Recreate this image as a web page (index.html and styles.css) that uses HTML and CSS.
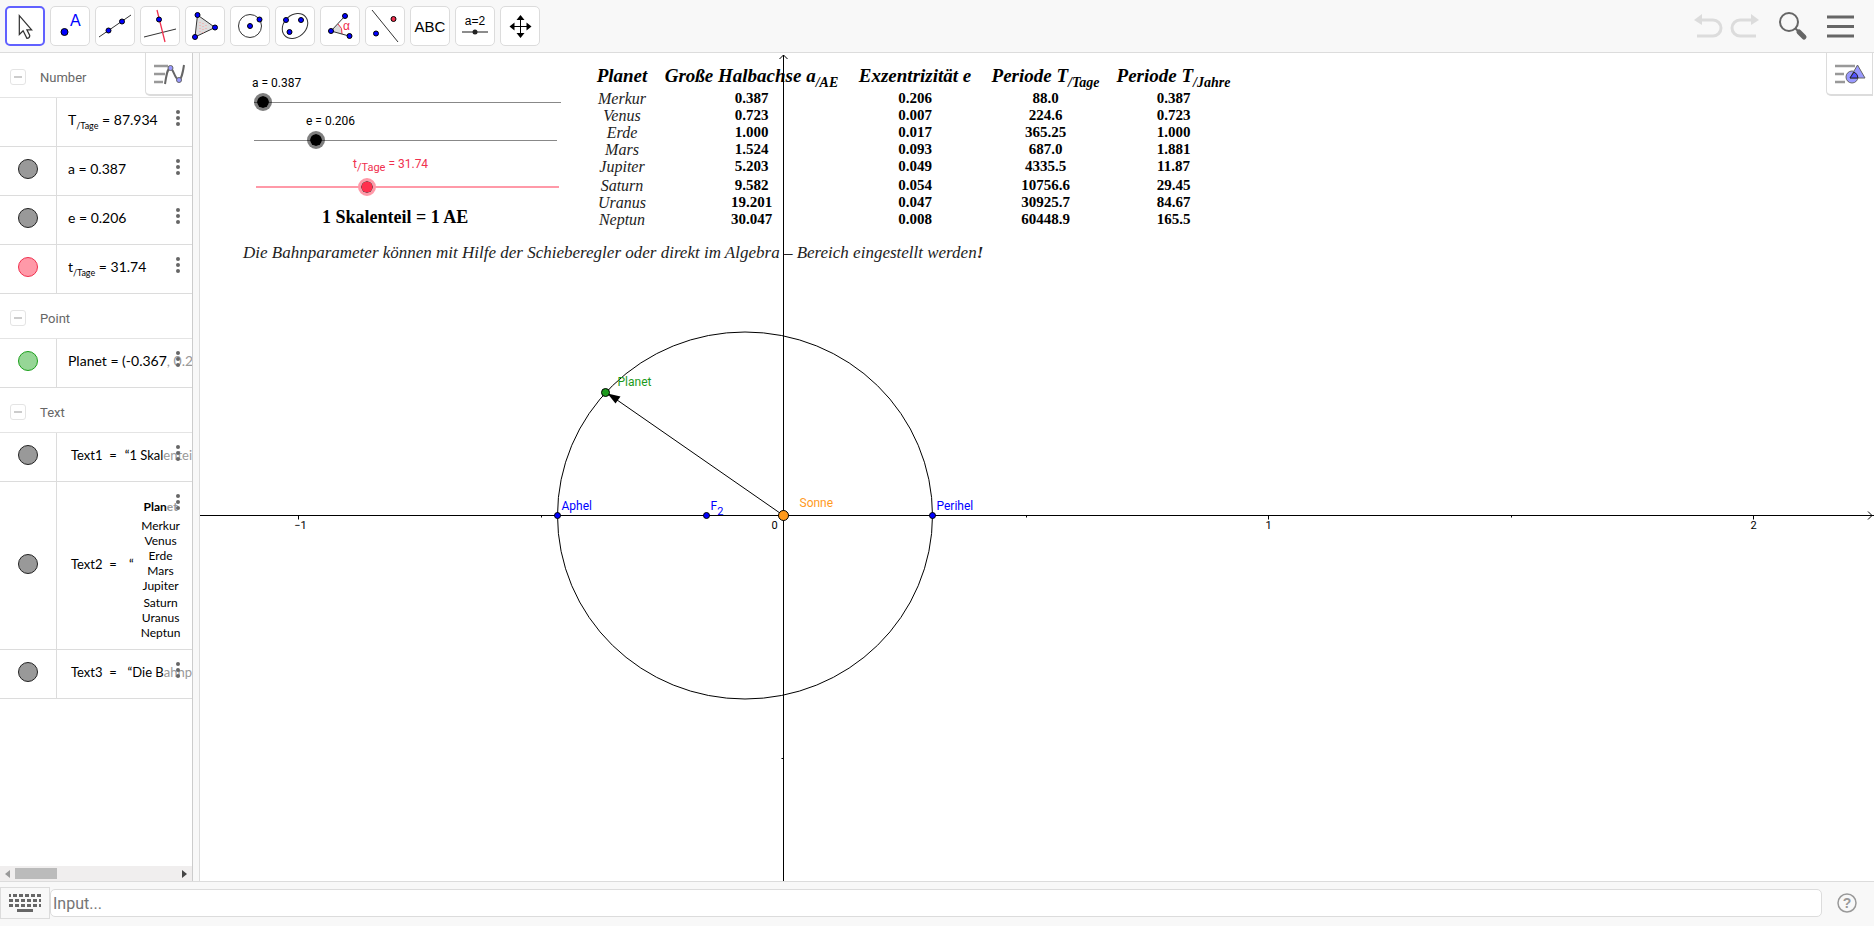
FILE: index.html
```
<!DOCTYPE html>
<html lang="de">
<head>
    <meta charset="utf-8">
    <title>GeoGebra - Planetenbahn</title>
    <link rel="stylesheet" href="styles.css">
</head>
<body>
    <header class="toolbar">
        <div class="tools">
            <button type="button" class="tool active" aria-label="Move"><svg viewBox="0 0 38 38"><path d="M13 8v20l4-4 4 8q3 0 3-3l-3-6h5z" fill="#fff" stroke="#333" stroke-width="1.300"/></svg></button>
            <button type="button" class="tool" aria-label="Point"><svg viewBox="0 0 38 38"><circle class="pt" cx="13.500" cy="25" r="3.500"/><text x="19" y="19" font-size="16" fill="#00f">A</text></svg></button>
            <button type="button" class="tool" aria-label="Line"><svg viewBox="0 0 38 38"><path class="ln" d="M3 30 35 8"/><circle class="pt" cx="12.500" cy="23.500" r="2.500"/><circle class="pt" cx="26" cy="14.500" r="2.500"/></svg></button>
            <button type="button" class="tool" aria-label="Perpendicular line"><svg viewBox="0 0 38 38"><path class="ln" d="M3 30 35 22"/><path d="M16 3l8 32" stroke="#f0304e" stroke-width="1.300"/><circle class="pt" cx="18" cy="12.500" r="2.500"/></svg></button>
            <button type="button" class="tool" aria-label="Polygon"><svg viewBox="0 0 38 38"><path d="M11.500 8 29 20.500 9 30z" fill="#ddd" stroke="#333"/><path d="M14 15v10M17 16v10M20 18v6" stroke="#f99" stroke-dasharray="1 2"/><circle class="pt" cx="11.500" cy="8" r="2.500"/><circle class="pt" cx="29" cy="20.500" r="2.500"/><circle class="pt" cx="9" cy="30" r="2.500"/></svg></button>
            <button type="button" class="tool" aria-label="Circle"><svg viewBox="0 0 38 38"><circle class="ln" cx="19" cy="19" r="11.500"/><circle class="pt" cx="19" cy="19" r="2.500"/><circle class="pt" cx="28.500" cy="12.500" r="2.500"/></svg></button>
            <button type="button" class="tool" aria-label="Ellipse"><svg viewBox="0 0 38 38"><ellipse class="ln" cx="19" cy="19" rx="14" ry="11" transform="rotate(-42 19 19)"/><circle class="pt" cx="10" cy="13" r="2.500"/><circle class="pt" cx="25" cy="13" r="2.500"/><circle class="pt" cx="13.500" cy="25" r="2.500"/></svg></button>
            <button type="button" class="tool" aria-label="Angle"><svg viewBox="0 0 38 38"><path d="M10 24l7-7q5 4 4 10z" fill="#ddd"/><path d="M17 17q5 4 4 10" fill="none" stroke="#f0304e"/><path class="ln" d="M24 9 10 24l18 5"/><text x="22" y="23" font-size="12" fill="#f0304e">α</text><circle class="pt" cx="24" cy="9" r="2.500"/><circle class="pt" cx="10" cy="24" r="2.500"/><circle class="pt" cx="28.500" cy="29" r="2.500"/></svg></button>
            <button type="button" class="tool" aria-label="Reflect"><svg viewBox="0 0 38 38"><path class="ln" d="M6 3 32 35"/><circle class="pt" cx="10" cy="26.500" r="2.500"/><circle class="pt red" cx="27.500" cy="12" r="2.500"/></svg></button>
            <button type="button" class="tool" aria-label="Text"><svg viewBox="0 0 38 38"><text x="19" y="25" font-size="15" text-anchor="middle">ABC</text></svg></button>
            <button type="button" class="tool" aria-label="Slider"><svg viewBox="0 0 38 38"><text x="19" y="18" font-size="12" text-anchor="middle">a=2</text><path d="M6 25h26" stroke="#666" stroke-width="1.500"/><circle cx="19" cy="25" r="2.500" fill="#222"/></svg></button>
            <button type="button" class="tool" aria-label="Move view"><svg viewBox="0 0 38 38"><path d="M12 19.500h15M19.500 12v15" stroke="#000"/><path d="M19.500 8l4 5h-8zM19.500 31l4-5h-8zM8.500 19.500l5-4v8zM30.500 19.500l-5-4v8z"/></svg></button>
        </div>
        <div class="actions">
            <button type="button" class="plain" aria-label="Undo"><svg width="30" height="26" viewBox="0 0 30 26"><path d="M9 7h11a8 8 0 0 1 0 16H4" fill="none" stroke="#dcdcdc" stroke-width="3"/><path d="M1 7l8-6v11z" fill="#dcdcdc"/></svg></button>
            <button type="button" class="plain" aria-label="Redo"><svg width="30" height="26" viewBox="0 0 30 26"><path d="M21 7H10a8 8 0 0 0 0 16h16" fill="none" stroke="#dcdcdc" stroke-width="3"/><path d="M29 7l-8-6v11z" fill="#dcdcdc"/></svg></button>
            <button type="button" class="plain search" aria-label="Search"><svg width="30" height="30" viewBox="0 0 30 30"><circle cx="11" cy="11" r="9" fill="none" stroke="#666" stroke-width="2"/><path d="M17 17l4 4" stroke="#666" stroke-width="2"/><path d="M21 21l5 5" stroke="#666" stroke-width="5" stroke-linecap="round"/></svg></button>
            <button type="button" class="plain" aria-label="Menu"><svg width="27" height="23" viewBox="0 0 27 23"><path d="M0 2h27M0 11.500h27M0 21h27" stroke="#666" stroke-width="3"/></svg></button>
        </div>
    </header>

    <main class="views">
        <aside class="algebra">
            <button type="button" class="stylebar" aria-label="Algebra style bar"><svg width="32" height="22" viewBox="0 0 32 22"><path d="M1 3h14M1 11h11M1 19h9" stroke="#999" stroke-width="2.500"/><path d="M12 21C14 8 15 5 17.500 5S22 17 26 17c2 0 4-8 5-15" fill="none" stroke="#666" stroke-width="2"/><circle cx="17.500" cy="5" r="2.500" fill="#99f" stroke="#666"/><circle cx="26" cy="17" r="2.500" fill="#99f" stroke="#666"/></svg></button>

            <div class="list">
                <h2 class="group"><button type="button" class="fold" aria-label="Collapse"></button>Number</h2>
                <div class="row"><div class="vis"></div><div class="val">T<sub>/Tage</sub> = 87.934</div><button type="button" class="more" aria-label="More"><i></i><i></i><i></i></button></div>
                <div class="row"><div class="vis"><button type="button" class="marble" aria-label="Show a"></button></div><div class="val">a = 0.387</div><button type="button" class="more" aria-label="More"><i></i><i></i><i></i></button></div>
                <div class="row"><div class="vis"><button type="button" class="marble" aria-label="Show e"></button></div><div class="val">e = 0.206</div><button type="button" class="more" aria-label="More"><i></i><i></i><i></i></button></div>
                <div class="row"><div class="vis"><button type="button" class="marble pink" aria-label="Show t"></button></div><div class="val">t<sub>/Tage</sub> = 31.74</div><button type="button" class="more" aria-label="More"><i></i><i></i><i></i></button></div>

                <h2 class="group"><button type="button" class="fold" aria-label="Collapse"></button>Point</h2>
                <div class="row"><div class="vis"><button type="button" class="marble green" aria-label="Show Planet"></button></div><div class="val">Planet = (-0.367<span class="fade">, 0.2</span></div><button type="button" class="more" aria-label="More"><i></i><i></i><i></i></button></div>

                <h2 class="group"><button type="button" class="fold" aria-label="Collapse"></button>Text</h2>
                <div class="row"><div class="vis"><button type="button" class="marble" aria-label="Show Text1"></button></div><div class="val text"><span class="name">Text1 &nbsp;=</span>“1 Skal<span class="fade">entei</span></div><button type="button" class="more" aria-label="More"><i></i><i></i><i></i></button></div>
                <div class="row tall"><div class="vis"><button type="button" class="marble" aria-label="Show Text2"></button></div><div class="val text"><span class="name">Text2 &nbsp;=</span>“
                    <ul class="names">
                        <li class="head">Plan<span class="fade">et</span></li>
                        <li>Merkur</li>
                        <li>Venus</li>
                        <li>Erde</li>
                        <li>Mars</li>
                        <li>Jupiter</li>
                        <li class="gap">Saturn</li>
                        <li>Uranus</li>
                        <li>Neptun</li>
                    </ul>
                </div><button type="button" class="more" aria-label="More"><i></i><i></i><i></i></button></div>
                <div class="row"><div class="vis"><button type="button" class="marble" aria-label="Show Text3"></button></div><div class="val text"><span class="name">Text3 &nbsp;=</span>“Die B<span class="fade">ahnp</span></div><button type="button" class="more" aria-label="More"><i></i><i></i><i></i></button></div>
            </div>

            <div class="scrollbar">
                <svg width="5" height="8" viewBox="0 0 5 8"><path d="M5 0v8L0 4z" fill="#999"/></svg>
                <div class="thumb"></div>
                <svg width="5" height="8" viewBox="0 0 5 8"><path d="M0 0v8l5-4z" fill="#444"/></svg>
            </div>
        </aside>
        <div class="splitter"></div>

        <section class="graphics">
            <table class="planets">
                <colgroup><col class="c1"><col class="c2"><col class="c3"><col class="c4"><col class="c5"></colgroup>
                <thead>
                    <tr><th>Planet</th><th>Große Halbachse a<sub>/AE</sub></th><th>Exzentrizität e</th><th>Periode T<sub>/Tage</sub></th><th>Periode T<sub>/Jahre</sub></th></tr>
                </thead>
                <tbody>
                    <tr><td>Merkur</td><td>0.387</td><td>0.206</td><td>88.0</td><td>0.387</td></tr>
                    <tr><td>Venus</td><td>0.723</td><td>0.007</td><td>224.6</td><td>0.723</td></tr>
                    <tr><td>Erde</td><td>1.000</td><td>0.017</td><td>365.25</td><td>1.000</td></tr>
                    <tr><td>Mars</td><td>1.524</td><td>0.093</td><td>687.0</td><td>1.881</td></tr>
                    <tr class="last"><td>Jupiter</td><td>5.203</td><td>0.049</td><td>4335.5</td><td>11.87</td></tr>
                    <tr><td>Saturn</td><td>9.582</td><td>0.054</td><td>10756.6</td><td>29.45</td></tr>
                    <tr><td>Uranus</td><td>19.201</td><td>0.047</td><td>30925.7</td><td>84.67</td></tr>
                    <tr><td>Neptun</td><td>30.047</td><td>0.008</td><td>60448.9</td><td>165.5</td></tr>
                </tbody>
            </table>

            <svg class="plot" width="100%" height="100%">
                <!-- origin is the sun, 1 AE = 485px -->
                <svg y="462.5" width="100%" overflow="visible">
                    <line class="axis" x1="0" x2="100%" y1="0" y2="0"/>
                    <svg x="100%" overflow="visible"><path class="curve" d="M-6-4l4 4-4 4"/></svg>
                </svg>
                <svg x="583.5" height="100%" overflow="visible">
                    <line class="axis" x1="0" x2="0" y1="2" y2="100%"/>
                    <path class="curve" d="M-4 6l4-4 4 4"/>
                </svg>
                <g transform="translate(583.5 462.5)">
                    <path class="axis" d="M-485 0v4M-242 0v2M243 0v2M485 0v4M728 0v2M970 0v4M-2 243h2"/>
                    <g class="ticks">
                        <text x="-483" y="13">−1</text>
                        <text x="-9" y="13">0</text>
                        <text x="485" y="13">1</text>
                        <text x="970" y="13">2</text>
                    </g>
                    <ellipse class="curve" cx="-38.500" cy="0" rx="187.500" ry="183.500"/>
                    <path class="curve" d="M0 0-170-118"/>
                    <path d="M-176-122l13 3-5 7z"/>
                    <circle class="pt" cx="-226" cy="0" r="3"/>
                    <circle class="pt" cx="-77" cy="0" r="3"/>
                    <circle class="pt" cx="149" cy="0" r="3"/>
                    <circle class="pt green" cx="-178" cy="-123" r="4"/>
                    <circle class="pt orange" cx="0" cy="0" r="5"/>
                    <g class="labels">
                        <text x="-222" y="-6">Aphel</text>
                        <text x="-73" y="-6">F<tspan dy="5" font-size="11">2</tspan></text>
                        <text x="153" y="-6">Perihel</text>
                        <text class="green" x="-166" y="-130">Planet</text>
                        <text class="orange" x="16" y="-9">Sonne</text>
                    </g>
                </g>
            </svg>

            <label class="caption cap-a" for="a">a = 0.387</label>
            <input class="slider slider-a" type="range" id="a" min="0.1" max="10" step="any" value="0.387">
            <label class="caption cap-e" for="e">e = 0.206</label>
            <input class="slider slider-e" type="range" id="e" min="0" max="1" step="any" value="0.206">
            <label class="caption cap-t" for="t">t<sub>/Tage</sub> = 31.74</label>
            <input class="slider slider-t" type="range" id="t" min="0" max="87" step="any" value="31.74">

            <p class="scale">1 Skalenteil = 1 AE</p>
            <p class="hint">Die Bahnparameter können mit Hilfe der Schieberegler oder direkt im Algebra – Bereich eingestellt werden<b>!</b></p>

            <button type="button" class="stylebar" aria-label="Graphics style bar"><svg width="32" height="22" viewBox="0 0 32 22"><path d="M1 3h20M1 11h9M1 19h10" stroke="#999" stroke-width="2.500"/><circle cx="18" cy="14" r="6" fill="#99f" stroke="#666"/><path d="M23.500 2l7.500 13H16z" fill="#99f" stroke="#666"/><path d="M16 15l4-6q4 2 4 6z" fill="#55f" stroke="#222"/></svg></button>
        </section>
    </main>

    <footer class="inputbar">
        <button type="button" class="keyboard" aria-label="Keyboard"><svg width="32" height="18" viewBox="0 0 32 18"><path d="M0 1.500h32" stroke-dasharray="2 2 4 2 4 2 4 2 4 2 4"/><path d="M0 6.500h32M0 11.500h32" stroke-dasharray="4 2"/><path d="M8 16.500h16"/></svg></button>
        <input type="text" class="command" placeholder="Input..." aria-label="Input">
        <button type="button" class="plain help" aria-label="Help"><svg width="20" height="20" viewBox="0 0 20 20"><circle cx="10" cy="10" r="9" fill="none" stroke="#999" stroke-width="1.500"/><text x="10" y="15" text-anchor="middle">?</text></svg></button>
    </footer>
</body>
</html>
```
FILE: styles.css
```
* {
    box-sizing: border-box;
}

body {
    margin: 0;
    height: 100vh;
    display: flex;
    flex-direction: column;
    overflow: hidden;
    background: #fff;
    font-family: Roboto, Arial, sans-serif;
    font-size: 12px;
    color: #000;
}

button {
    padding: 0;
    border: none;
    background: none;
    cursor: pointer;
}

svg {
    display: block;
}

/* toolbar */
.toolbar {
    display: flex;
    justify-content: space-between;
    align-items: center;
    height: 53px;
    padding: 0 20px 0 5px;
    background: #f8f8f8;
    border-bottom: 1px solid #dcdcdc;
}

.tools {
    display: flex;
    gap: 5px;
}

.tool {
    width: 40px;
    height: 40px;
    background: #fff;
    border: 1px solid #dcdcdc;
    border-radius: 5px;
}

.tool.active {
    border: 2px solid #6161ff;
}

.actions {
    display: flex;
    align-items: center;
    gap: 7px;
}

.search {
    margin: 0 12px 0 11px;
}

.ln {
    fill: none;
    stroke: #333;
}

.pt {
    fill: #00f;
    stroke: #000;
}

.pt.red {
    fill: #f0304e;
}

.pt.green {
    fill: #1c9a1c;
}

.pt.orange {
    fill: #ff9a1c;
}

/* algebra view */
.views {
    flex: 1;
    display: flex;
    min-height: 0;
}

.algebra {
    position: relative;
    display: flex;
    flex-direction: column;
    width: 193px;
    border-right: 1px solid #ccc;
}

.splitter {
    width: 7px;
    background: #f8f8f8;
    border-right: 1px solid #dcdcdc;
}

.stylebar {
    position: absolute;
    top: 0;
    right: 0;
    display: flex;
    align-items: center;
    justify-content: center;
    width: 47px;
    height: 43px;
    background: #fff;
    border: 1px solid #dcdcdc;
    border-width: 0 0 2px 1px;
    border-bottom-left-radius: 5px;
}

.graphics .stylebar {
    right: 1px;
    border-right-width: 1px;
}

.list {
    flex: 1;
    overflow: hidden;
}

.group {
    display: flex;
    align-items: center;
    gap: 14px;
    height: 45px;
    margin: 0;
    padding: 4px 0 0 10px;
    border-bottom: 1px solid #e4e4e4;
    font-size: 13px;
    font-weight: normal;
    color: #666;
}

.fold {
    display: flex;
    align-items: center;
    justify-content: center;
    width: 16px;
    height: 16px;
    border: 1px solid #e4e4e4;
    border-radius: 3px;
}

.fold::before {
    content: "";
    width: 8px;
    height: 2px;
    background: #ccc;
}

.row {
    position: relative;
    display: flex;
    height: 49px;
    border-bottom: 1px solid #dcdcdc;
}

.row.tall {
    height: 168px;
}

.vis {
    display: flex;
    align-items: center;
    justify-content: center;
    width: 57px;
    padding-bottom: 4px;
    border-right: 1px solid #dcdcdc;
}

.marble {
    width: 20px;
    height: 20px;
    background: #999;
    border: 1px solid #222;
    border-radius: 50%;
}

.marble.pink {
    background: #ff99a8;
    border-color: #f0304e;
}

.marble.green {
    background: #96d696;
    border-color: #1ca01c;
}

.val {
    flex: 1;
    min-width: 0;
    padding-left: 11px;
    overflow: hidden;
    white-space: nowrap;
    font-family: Lato, sans-serif;
    font-size: 14px;
    line-height: 44px;
}

.val sub {
    font-size: 9px;
    line-height: 0;
}

.val.text {
    display: flex;
    align-items: center;
    padding: 0 0 4px 14px;
    font-size: 13px;
}

.name {
    width: 58px;
}

.fade {
    color: #999;
}

.names {
    margin: 0 0 0 7px;
    padding: 12px 0 0;
    list-style: none;
    text-align: center;
    font-size: 12px;
    line-height: 15px;
}

.names .head {
    font-weight: bold;
    margin-bottom: 4px;
}

.names .gap {
    margin-top: 2px;
}

.more {
    position: absolute;
    top: 12px;
    right: 12px;
    display: flex;
    flex-direction: column;
    gap: 2px;
}

.more i {
    width: 4px;
    height: 4px;
    background: #666;
    border-radius: 50%;
}

.scrollbar {
    display: flex;
    align-items: center;
    gap: 5px;
    height: 15px;
    padding: 0 5px;
    background: #f0eeee;
}

.thumb {
    width: 42px;
    height: 11px;
    margin-right: auto;
    background: #bbb;
}

/* graphics view */
.graphics {
    position: relative;
    flex: 1;
    min-width: 0;
    overflow: hidden;
}

.plot {
    position: absolute;
    top: 0;
    left: 0;
}

.axis {
    stroke: #000;
}

.curve {
    fill: none;
    stroke: #000;
}

.ticks {
    font-size: 11px;
    text-anchor: middle;
}

.labels {
    font-size: 12px;
    fill: #00f;
}

text.green {
    fill: #1c9a1c;
}

text.orange {
    fill: #ff9a1c;
}

.caption {
    position: absolute;
    line-height: 16px;
    white-space: nowrap;
}

.caption sub {
    font-size: 11px;
    line-height: 0;
}

.slider {
    position: absolute;
    width: 321px;
    height: 18px;
    margin: 0;
    appearance: none;
    background: linear-gradient(#888, #888) center / calc(100% - 18px) 1px no-repeat;
}

.slider::-webkit-slider-thumb {
    appearance: none;
    width: 18px;
    height: 18px;
    background: #000;
    background-clip: padding-box;
    border: 3px solid rgba(0, 0, 0, 0.5);
    border-radius: 50%;
}

.cap-a {
    top: 22px;
    left: 52px;
}

.slider-a {
    top: 40px;
    left: 45px;
    width: 325px;
}

.cap-e {
    top: 60px;
    left: 106px;
}

.slider-e {
    top: 78px;
    left: 45px;
}

.cap-t {
    top: 103px;
    left: 153px;
    color: #f0304e;
}

.slider-t {
    top: 125px;
    left: 47px;
    background: linear-gradient(#ff99a8, #ff99a8) center / calc(100% - 18px) 2px no-repeat;
}

.slider-t::-webkit-slider-thumb {
    background: radial-gradient(#ff304e 0 5px, #222 6px);
    background-clip: padding-box;
    border-color: #ff99a8;
}

.scale,
.hint,
.planets {
    position: absolute;
    margin: 0;
    font-family: "Liberation Serif", serif;
    white-space: nowrap;
}

.scale {
    top: 154px;
    left: 122px;
    font-size: 18px;
    line-height: 20px;
    font-weight: bold;
}

.hint {
    top: 190px;
    left: 43px;
    font-size: 17px;
    line-height: 20px;
    font-style: italic;
    color: #222;
}

.planets {
    top: 12px;
    left: 388px;
    width: 651px;
    table-layout: fixed;
    border-collapse: collapse;
    text-align: center;
    font-size: 15px;
    line-height: 17px;
}

.planets th,
.planets td {
    padding: 0;
}

.planets th {
    height: 25px;
    font-size: 19px;
    font-style: italic;
    vertical-align: top;
    line-height: 22px;
}

.planets sub {
    font-size: 14px;
    line-height: 0;
}

.planets td {
    font-weight: bold;
}

.planets td:first-child {
    font-size: 16px;
    font-weight: normal;
    font-style: italic;
    color: #222;
}

.planets .last td {
    padding-bottom: 2px;
}

.c1 { width: 68px; }
.c2 { width: 191px; }
.c3 { width: 136px; }
.c4 { width: 125px; }
.c5 { width: 131px; }

/* input bar */
.inputbar {
    display: flex;
    align-items: center;
    height: 45px;
    padding: 0 17px 2px 0;
    background: #f8f8f8;
    border-top: 1px solid #dcdcdc;
}

.keyboard {
    display: flex;
    align-items: center;
    justify-content: center;
    width: 50px;
    height: 32px;
    border: 1px solid #dcdcdc;
}

.keyboard path {
    stroke: #666;
    stroke-width: 3;
}

.command {
    flex: 1;
    height: 28px;
    margin-right: 15px;
    padding: 0 2px;
    border: 1px solid #dcdcdc;
    border-radius: 5px;
    font-family: inherit;
    font-size: 16px;
}

.command::placeholder {
    color: #757575;
}

.help text {
    font-size: 14px;
    font-weight: bold;
    fill: #999;
}
```
